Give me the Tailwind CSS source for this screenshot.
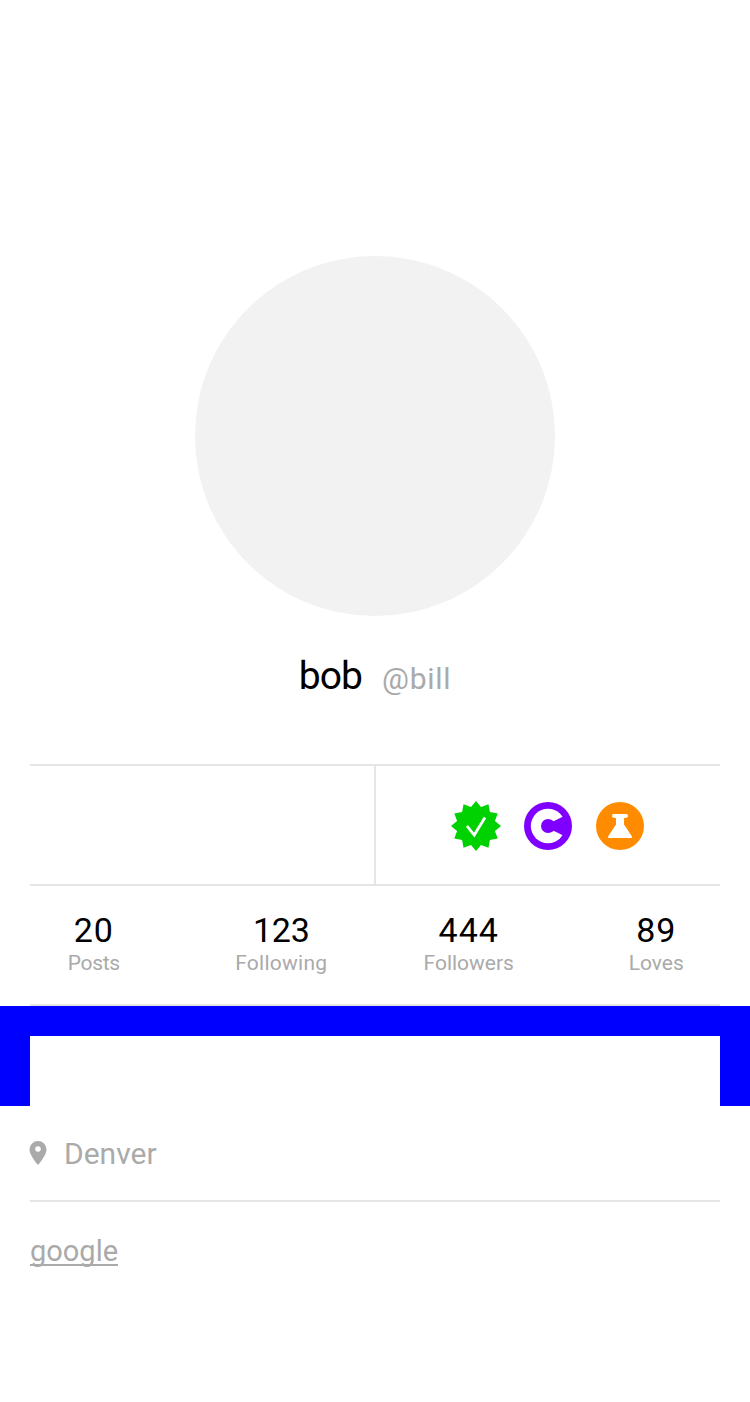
<!DOCTYPE html>
<html lang="en"><head><meta charset="utf-8"><title>Profile</title>
<script src="https://cdn.jsdelivr.net/npm/@tailwindcss/browser@4"></script></head>
<body class="bg-white text-black font-['Roboto',sans-serif]">
<main class="w-[750px] h-[1402px] flex flex-col overflow-hidden">
<div class="shrink-0 mt-64 mx-auto size-[360px] rounded-full bg-[#f2f2f2]"></div>
<div class="h-[148px] shrink-0 pt-[35px] flex justify-center items-baseline gap-[20px] whitespace-nowrap">
<h1 class="text-[39px] leading-[50px] tracking-[-0.9px]">bob</h1>
<span class="text-[30px] leading-[50px] tracking-[0.7px] text-[#aaa]">@bill</span>
</div>
<section class="mx-[30px] h-[122px] shrink-0 border-y-2 border-[#e5e5e5] flex">
<div class="w-[346px] border-r-2 border-[#e5e5e5]"></div>
<div class="flex-1 flex items-center justify-center gap-6 pt-0.5">
<svg class="size-12 overflow-visible" viewBox="-24 -24 48 48"><path fill="#00d100" d="M0-25 5-18.9 12.5-21.7 13.9-13.9 21.7-12.5 18.9-5 25 0 18.9 5 21.7 12.5 13.9 13.9 12.5 21.7 5 18.9 0 25-5 18.9-12.5 21.7-13.9 13.9-21.7 12.5-18.9 5-25 0-18.9-5-21.7-12.5-13.9-13.9-12.5-21.7-5-18.9Z"/><path d="M-9 0-1.8 9 9-8.5" fill="none" stroke="#fff" stroke-width="2.8"/></svg>
<svg class="size-12" viewBox="-24 -24 48 48"><circle r="24" fill="#8000ff"/><circle r="17.2" fill="#fff"/><circle r="7" fill="#8000ff"/><path fill="#8000ff" d="M3-6.3Q4.8-5.2 5.5-4.7L14.2-9H20V9H14.2L5.5 4.7Q4.8 5.2 3 6.3Z"/></svg>
<svg class="size-12" viewBox="-24 -24 48 48"><circle r="24" fill="#ff8c00"/><path fill="#fff" d="M-6.2-12H6.2Q8-12 8-10.2T6.2-8.2H5.2Q4-8.2 4-7V-1.5L12 10.5Q12.3 12 11 12H-11Q-12.3 12-12 10.5L-4-1.5V-7Q-4-8.2-5.2-8.2H-6.2Q-8-8.2-8-10.2T-6.2-12Z"/></svg>
</div>
</section>
<section class="relative h-[120px] shrink-0 grid grid-cols-4 text-center pt-6">
<div><div class="text-[34px] leading-10 tracking-[1px]">20</div><div class="text-[21px] leading-6 pt-px -tracking-[0.3px] text-[#aaa]">Posts</div></div>
<div><div class="text-[34px] leading-10 -tracking-[0.2px]">123</div><div class="text-[21px] leading-6 pt-px tracking-[0.25px] text-[#aaa]">Following</div></div>
<div><div class="text-[34px] leading-10 tracking-[1px]">444</div><div class="text-[21px] leading-6 pt-px tracking-[0px] text-[#aaa]">Followers</div></div>
<div><div class="text-[34px] leading-10 tracking-[1px]">89</div><div class="text-[21px] leading-6 pt-px tracking-[0px] text-[#aaa]">Loves</div></div>
<div class="absolute bottom-0 inset-x-[30px] h-0.5 bg-[#e5e5e5]"></div>
</section>
<section class="h-[100px] shrink-0 bg-[#00f] px-[30px] pt-[30px]"><div class="h-full bg-white"></div></section>
<section class="mx-[30px] h-24 shrink-0 border-b-2 border-[#e5e5e5] flex items-center text-[#aaa] text-[30px]">
<svg class="w-[17px] h-6 -ml-px mr-[18px] shrink-0 overflow-visible" viewBox="-0.5 0 17 24"><path fill="#aaa" fill-rule="evenodd" d="M8.5 0A8.5 8.5 0 0 0 0 8.5C0 14.5 8.5 24 8.5 24S17 14.5 17 8.5A8.5 8.5 0 0 0 8.5 0ZM8.5 5.2A2.8 2.8 0 1 1 8.5 10.8 2.8 2.8 0 1 1 8.5 5.2Z"/></svg>
<span class="tracking-[0px]">Denver</span></section>
<section class="mx-[30px] h-24 shrink-0 flex items-center text-[#aaa] text-[29px]"><a class="border-b-2 border-[#aaa] h-[31px] leading-[32px] tracking-[0px]">google</a></section>
</main></body></html>
